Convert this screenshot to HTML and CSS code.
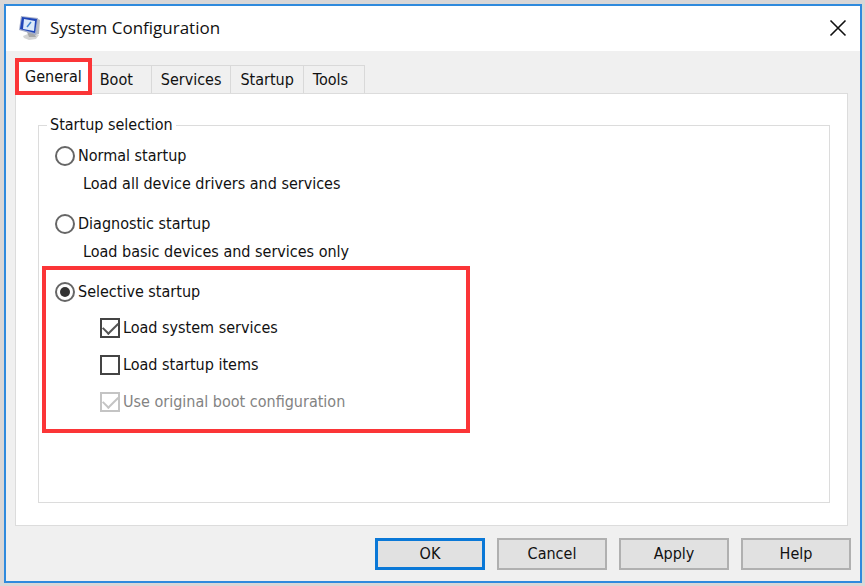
FILE: index.html
```html
<!DOCTYPE html>
<html lang="en">
<head>
    <meta charset="UTF-8">
    <meta name="viewport" content="width=device-width, initial-scale=1.0">
    <title>System Configuration</title>
    <link rel="stylesheet" href="styles.css">
</head>
<body>
    <div class="window">
        <header class="titlebar">
            <svg class="app-icon" width="22" height="26" viewBox="0 0 22 26">
                <path d="M4 21l7-3 9 2-3 4-7 1-5-2z" fill="#d4d4d4"/>
                <path d="M8 17l7 1 2 4-7 0z" fill="#a8a8a8"/>
                <path d="M17 3l4 2-1 14-4 1z" fill="#b8bcc4"/>
                <path d="M2 1l17 2-2 17L0 15z" fill="#a4aecb"/>
                <path d="M3 2l15 2-2 14L1 14z" fill="#1f45b8"/>
                <path d="M5 4l11 2-1 10-11-2z" fill="#dceafa"/>
                <path d="M8 12l4-5" stroke="#3a7fd0" stroke-width="1.5"/>
            </svg>
            <h1>System Configuration</h1>
            <button type="button" class="close-btn" aria-label="Close">
                <svg width="18" height="18" viewBox="0 0 18 18">
                    <path d="M1.500 1.500l15 15M16.500 1.500l-15 15" stroke="#111" stroke-width="1.600"/>
                </svg>
            </button>
        </header>

        <main class="content">
            <div class="tabs" role="tablist">
                <button type="button" class="tab active" role="tab" aria-selected="true">General</button>
                <button type="button" class="tab" role="tab">Boot</button>
                <button type="button" class="tab" role="tab">Services</button>
                <button type="button" class="tab" role="tab">Startup</button>
                <button type="button" class="tab" role="tab">Tools</button>
            </div>

            <div class="panel" role="tabpanel">
                <fieldset class="group">
                    <legend>Startup selection</legend>
                    <div class="option">
                        <label class="choice"><input type="radio" name="startup">Normal startup</label>
                        <p class="hint">Load all device drivers and services</p>
                    </div>
                    <div class="option">
                        <label class="choice"><input type="radio" name="startup">Diagnostic startup</label>
                        <p class="hint">Load basic devices and services only</p>
                    </div>
                    <div class="selective">
                        <label class="choice"><input type="radio" name="startup" checked>Selective startup</label>
                        <div class="items">
                            <label class="choice"><input type="checkbox" checked>Load system services</label>
                            <label class="choice"><input type="checkbox">Load startup items</label>
                            <label class="choice disabled"><input type="checkbox" checked disabled>Use original boot configuration</label>
                        </div>
                    </div>
                </fieldset>
            </div>

            <div class="actions">
                <button type="button" class="btn default">OK</button>
                <button type="button" class="btn">Cancel</button>
                <button type="button" class="btn">Apply</button>
                <button type="button" class="btn">Help</button>
            </div>
        </main>
    </div>
</body>
</html>
```
FILE: styles.css
```css
* {
    box-sizing: border-box;
}
body {
    margin: 0;
    padding: 4px 3px 3px 4px;
    min-height: 100vh;
    display: flex;
    background: #d9d7d7;
    font-family: "DejaVu Sans Condensed", Tahoma, sans-serif;
    font-size: 16px;
    line-height: 24px;
    color: #111;
}
.window {
    flex: 1;
    display: flex;
    flex-direction: column;
    border: 2px solid #2f8add;
    background: #f0f0f0;
}
.titlebar {
    display: flex;
    align-items: center;
    height: 45px;
    padding: 0 13px 2px;
    background: #fff;
}
.app-icon {
    margin-right: 9px;
}
.titlebar h1 {
    flex: 1;
    margin: 0;
    font-family: "Open Sans", "Segoe UI", sans-serif;
    font-size: 17px;
    font-weight: 400;
}
.close-btn {
    display: flex;
    padding: 0;
    border: none;
    background: none;
}
.content {
    flex: 1;
    display: flex;
    flex-direction: column;
    padding: 7px 9px 11px;
}

/* tabs */
.tabs {
    display: flex;
    align-items: flex-end;
}
.tab {
    min-width: 62px;
    height: 28px;
    margin-right: -1px;
    padding: 0 9px;
    border: 1px solid #d9d9d9;
    border-bottom: none;
    background: #f0f0f0;
    font: inherit;
    color: inherit;
    text-align: left;
}
.tab.active {
    height: 37px;
    margin: 0 -2px -2px 0;
    padding: 0 6px;
    border: 4px solid #fb3537;
    background: #fff;
    z-index: 1;
}
.panel {
    flex: 1;
    display: flex;
    margin-right: 3px;
    padding: 19px 17px 22px 22px;
    border: 1px solid #dcdcdc;
    background: #fff;
}
.group {
    flex: 1;
    min-width: 0;
    margin: 0;
    padding: 7px 3px;
    border: 1px solid #dcdcdc;
}
.group legend {
    margin-left: 5px;
    padding: 0 3px;
}

/* startup options */
.option {
    margin: 0 13px 16px;
}
.option .choice {
    margin-bottom: 4px;
}
.hint {
    margin: 0 0 0 28px;
}
.choice {
    display: flex;
    align-items: center;
    gap: 3px;
}
.choice input {
    appearance: none;
    display: grid;
    place-items: center;
    width: 20px;
    height: 20px;
    margin: 0;
    background: #fff;
}
.choice input[type="radio"] {
    border: 2px solid #666;
    border-radius: 50%;
}
.choice input[type="radio"]:checked::before {
    content: "";
    width: 10px;
    height: 10px;
    border-radius: 50%;
    background: #333;
}
.choice input[type="checkbox"] {
    border: 2px solid #444;
}
.choice input[type="checkbox"]:checked::before {
    content: "";
    width: 13px;
    height: 7px;
    margin-bottom: 4px;
    border-left: 2px solid #555;
    border-bottom: 2px solid #555;
    transform: rotate(-45deg);
}
.disabled {
    color: #838383;
}
.choice.disabled input,
.choice.disabled input:checked::before {
    border-color: #c4c4c4;
}
.selective {
    width: 428px;
    max-width: 100%;
    margin-top: -14px;
    padding: 10px 9px 15px;
    border: 4px solid #fb3537;
}
.items {
    display: flex;
    flex-direction: column;
    gap: 13px;
    margin: 12px 0 0 45px;
}

/* buttons */
.actions {
    display: flex;
    justify-content: flex-end;
    gap: 12px;
    margin-top: 12px;
}
.btn {
    width: 110px;
    height: 32px;
    padding: 0;
    border: 2px solid #b0b0b0;
    background: #e1e1e1;
    font: inherit;
    color: inherit;
}
.btn.default {
    border: 3px solid #0a78d7;
}
```
